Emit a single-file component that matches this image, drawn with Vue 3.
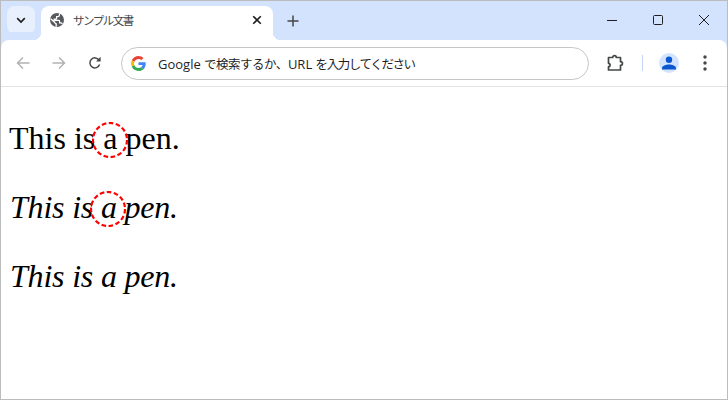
<template>
  <div class="window">
    <div class="tabstrip">
      <button class="tab-search" type="button" aria-label="Search tabs">
        <svg width="12" height="12" viewBox="0 0 12 12"><path d="M2.2 4.2 6 8l3.8-3.8" fill="none" stroke="#1f1f1f" stroke-width="1.7" /></svg>
      </button>
      <div class="tab">
        <svg class="globe" width="14" height="14" viewBox="0 0 14 14">
          <circle cx="7" cy="7" r="7" fill="#56595e" />
          <path d="M.6 5.8 4.6 9.2c.2 1 .8 1.4 1.6 1.6v3" fill="none" stroke="#fff" stroke-width="1.3" />
          <path d="M9.4 .6v1.6c0 .9-.7 1.4-1.6 1.4H6.6v1.6c0 .6-.4 1-1 1H4.2v1.2h4.6c.5 0 .8.4.8.8v1.6h1c.8 0 1.4.4 1.8 1.1" fill="none" stroke="#fff" stroke-width="1.2" />
        </svg>
        <span class="tab-title">サンプル文書</span>
        <svg class="tab-close" width="10" height="10" viewBox="0 0 10 10"><path d="M1.2 1.2l7.6 7.6M8.8 1.2 1.2 8.8" stroke="#1f1f1f" stroke-width="1.6" /></svg>
      </div>
      <svg class="new-tab" width="12" height="12" viewBox="0 0 12 12"><path d="M6 .5v11M.5 6h11" stroke="#444746" stroke-width="1.5" /></svg>
      <div class="win-controls">
        <svg width="10" height="10" viewBox="0 0 10 10"><path d="M0 5.5h10" stroke="#1f1f1f" stroke-width="1" /></svg>
        <svg width="10" height="10" viewBox="0 0 10 10"><rect x=".5" y=".5" width="9" height="9" rx="1" fill="none" stroke="#1f1f1f" stroke-width="1" /></svg>
        <svg width="10" height="10" viewBox="0 0 10 10"><path d="M0 0l10 10M10 0 0 10" stroke="#1f1f1f" stroke-width="1" /></svg>
      </div>
    </div>

    <div class="toolbar">
      <div class="nav-icons">
        <svg width="14" height="14" viewBox="0 0 14 14"><path d="M13.5 7H1.5M7 1.5 1.5 7 7 12.5" fill="none" stroke="#b0b2b5" stroke-width="1.5" /></svg>
        <svg width="14" height="14" viewBox="0 0 14 14"><path d="M.5 7h12M7 1.5 12.5 7 7 12.5" fill="none" stroke="#b0b2b5" stroke-width="1.5" /></svg>
        <svg width="14" height="14" viewBox="0 0 14 14"><path d="M11.6 8.6A5 5 0 1 1 11 4" fill="none" stroke="#444746" stroke-width="1.5" /><path d="M12.6.8v4.6H8z" fill="#444746" /></svg>
      </div>
      <div class="omnibox">
        <svg width="15" height="15" viewBox="0 0 48 48">
          <path fill="#EA4335" d="M24 9.5c3.54 0 6.71 1.22 9.21 3.6l6.85-6.85C35.9 2.38 30.47 0 24 0 14.62 0 6.51 5.38 2.56 13.22l7.98 6.19C12.43 13.72 17.74 9.5 24 9.5z" />
          <path fill="#4285F4" d="M46.98 24.55c0-1.57-.15-3.09-.38-4.55H24v9.02h12.94c-.58 2.96-2.26 5.48-4.78 7.18l7.73 6c4.51-4.18 7.09-10.36 7.09-17.65z" />
          <path fill="#FBBC05" d="M10.53 28.59c-.48-1.45-.76-2.99-.76-4.59s.27-3.14.76-4.59l-7.98-6.19C.92 16.46 0 20.12 0 24c0 3.88.92 7.54 2.56 10.78l7.97-6.19z" />
          <path fill="#34A853" d="M24 48c6.48 0 11.93-2.13 15.89-5.81l-7.73-6c-2.15 1.45-4.92 2.3-8.16 2.3-6.26 0-11.57-4.22-13.47-9.91l-7.98 6.19C6.51 42.62 14.62 48 24 48z" />
        </svg>
        <span class="omni-text">Google <span class="ja">で検索するか、</span>URL <span class="ja kana">を入力してください</span></span>
      </div>
      <div class="right-icons">
        <svg class="ext" width="18" height="18" viewBox="0 0 18 18"><path d="M1.5 3.5h4.2c0-2.6 3.6-2.6 3.6 0h4.2v4.2c2.6 0 2.6 3.6 0 3.6v4.7H1.5v-3.3c2.1 0 2.1-3.4 0-3.4z" fill="none" stroke="#444746" stroke-width="1.7" stroke-linejoin="round" /></svg>
        <span class="divider"></span>
        <span class="avatar">
          <svg width="14" height="14" viewBox="0 0 14 14"><circle cx="7" cy="3.8" r="3.2" fill="#0b57d0" /><path d="M0 13.6v-1.4c0-2.4 4-3.6 7-3.6s7 1.2 7 3.6v1.4z" fill="#0b57d0" /></svg>
        </span>
        <svg class="menu" width="4" height="16" viewBox="0 0 4 16"><circle cx="2" cy="2" r="1.7" fill="#444746" /><circle cx="2" cy="8" r="1.7" fill="#444746" /><circle cx="2" cy="14" r="1.7" fill="#444746" /></svg>
      </div>
    </div>

    <main class="page">
      <p>This is <span class="letter">a<svg class="ring" width="36" height="36" viewBox="0 0 36 36"><circle cx="18" cy="18" r="17" fill="none" stroke="#ff0000" stroke-width="2.2" stroke-dasharray="4.6 2.52" /></svg></span> pen.</p>
      <p class="italic">This is <span class="letter">a<svg class="ring" width="36" height="36" viewBox="0 0 36 36"><circle cx="18" cy="18" r="17" fill="none" stroke="#ff0000" stroke-width="2.2" stroke-dasharray="4.6 2.52" /></svg></span> pen.</p>
      <p class="italic">This is a pen.</p>
    </main>
  </div>
</template>

<script setup>
</script>

<style>
html,
body {
  margin: 0;
  background: #ffffff;
}
</style>

<style scoped>
.window {
  width: 728px;
  height: 400px;
  box-sizing: border-box;
  border: 1px solid #bcbcbc;
  display: flex;
  flex-direction: column;
  background: #ffffff;
  overflow: hidden;
}

.tabstrip {
  height: 39px;
  flex: none;
  display: flex;
  align-items: flex-start;
  background: #d3e3fd;
  padding: 5px 0 0 6px;
  box-sizing: border-box;
}

.tab-search {
  width: 28px;
  height: 28px;
  border: none;
  border-radius: 8px;
  background: #e8f0fe;
  padding: 0;
  display: flex;
  align-items: center;
  justify-content: center;
}

.tab {
  position: relative;
  width: 232px;
  height: 34px;
  margin-left: 6px;
  box-sizing: border-box;
  padding: 0 11px 6px 9px;
  background: #ffffff;
  border-radius: 8px 8px 0 0;
  display: flex;
  align-items: center;
  font-family: "Noto Sans CJK JP", "Noto Sans", sans-serif;
  font-size: 11.5px;
  letter-spacing: -1.5px;
  color: #45474a;
}

.tab::before,
.tab::after {
  content: "";
  position: absolute;
  bottom: 0;
  width: 8px;
  height: 8px;
}

.tab::before {
  left: -8px;
  background: radial-gradient(circle at 0 0, #d3e3fd 8px, #ffffff 8.5px);
}

.tab::after {
  right: -8px;
  background: radial-gradient(circle at 100% 0, #d3e3fd 8px, #ffffff 8.5px);
}

.tab-title {
  margin-left: 9px;
  flex: 1;
}

.globe {
  flex: none;
}

.new-tab {
  margin: 9px 0 0 14px;
  flex: none;
}

.win-controls {
  margin-left: auto;
  padding: 9px 18px 0 0;
  display: flex;
  gap: 36px;
}

.toolbar {
  height: 47px;
  flex: none;
  box-sizing: border-box;
  display: flex;
  align-items: center;
  background: #ffffff;
  border-radius: 8px 8px 0 0;
  border-bottom: 1px solid #e1e3e6;
  padding: 0 0 0 15px;
  box-shadow: 0 -8px 0 #d3e3fd;
}

.nav-icons {
  display: flex;
  gap: 22px;
  width: 93px;
  flex: none;
}

.omnibox {
  width: 468px;
  height: 33px;
  box-sizing: border-box;
  border: 1px solid #c4c7c5;
  border-radius: 17px;
  display: flex;
  align-items: center;
  gap: 12px;
  padding: 0 0 0 9px;
  margin-left: 12px;
  font-family: "Open Sans", "Noto Sans CJK JP", sans-serif;
  font-size: 13px;
  color: #1f1f1f;
  flex: none;
}

.omni-text {
  white-space: nowrap;
}

.ja {
  font-family: "Noto Sans CJK JP", sans-serif;
  font-size: 12.5px;
  letter-spacing: -0.5px;
}

.kana {
  letter-spacing: -1.4px;
}

.right-icons {
  flex: 1;
  display: flex;
  align-items: center;
  padding-left: 18px;
}

.divider {
  width: 1px;
  height: 16px;
  background: #c2d5f5;
  margin-left: 17px;
}

.avatar {
  width: 20px;
  height: 20px;
  border-radius: 50%;
  background: #d3e3fd;
  display: flex;
  align-items: center;
  justify-content: center;
  margin-left: 16px;
}

.menu {
  margin-left: 24px;
}

.page {
  flex: 1;
  padding: 0 0 0 8px;
  font-family: "Liberation Serif", "Times New Roman", serif;
  font-size: 32px;
  line-height: 37px;
  color: #000000;
}

.page p {
  margin: 32px 0;
}

.page p:first-child {
  margin-top: 33px;
}

.italic {
  font-style: italic;
  letter-spacing: -0.2px;
  padding-left: 1px;
}

.letter {
  position: relative;
}

.ring {
  position: absolute;
  left: 50%;
  top: 50%;
  margin: -16px 0 0 -18px;
}

.italic .ring {
  margin-left: -19px;
}
</style>
